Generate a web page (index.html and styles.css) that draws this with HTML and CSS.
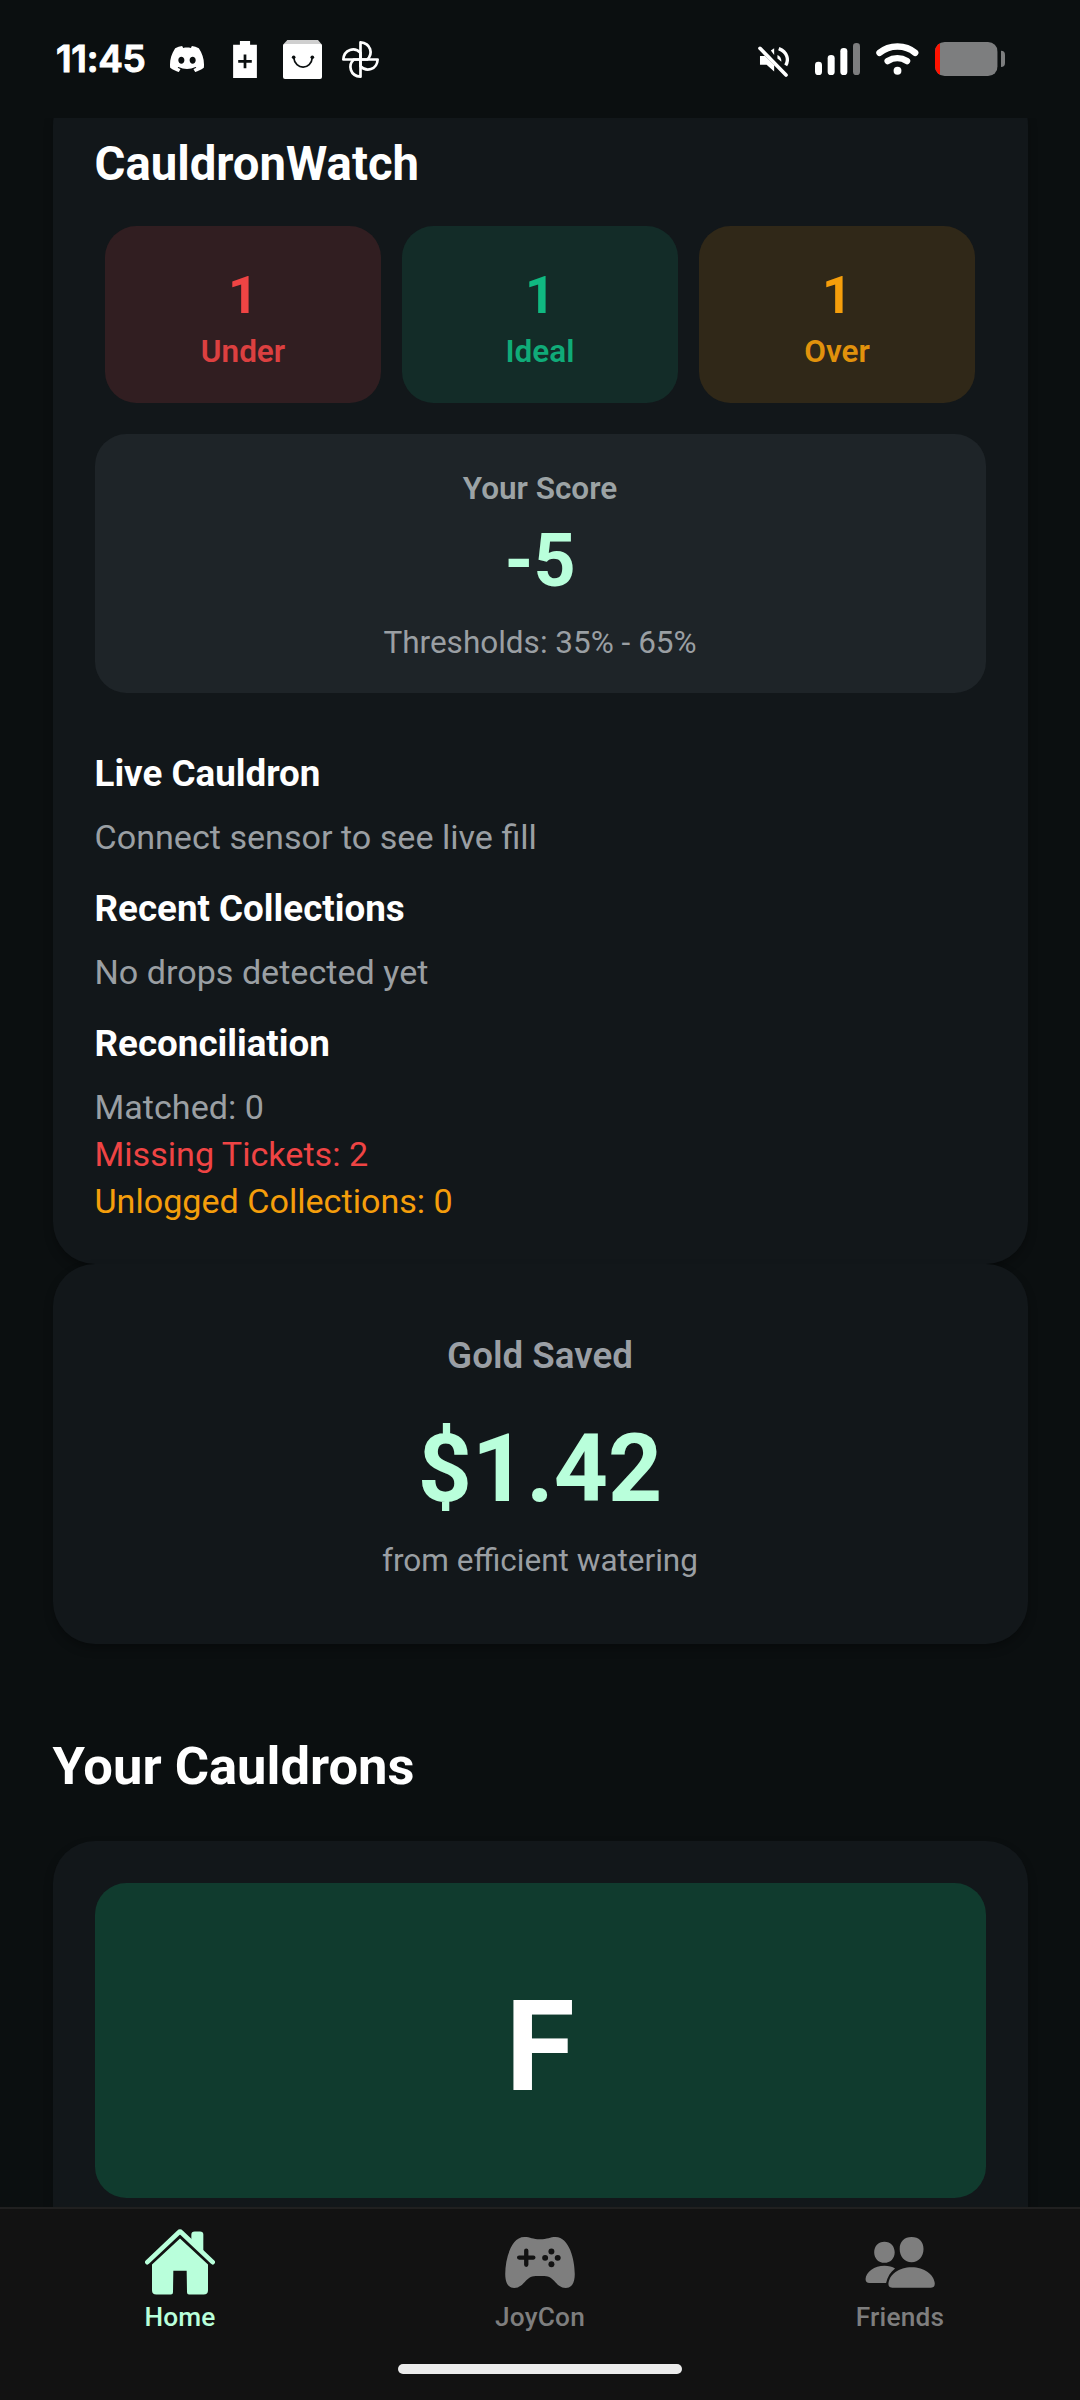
FILE: index.html
```html
<!DOCTYPE html>
<html lang="en">
<head>
<meta charset="utf-8">
<title>CauldronWatch</title>
<link rel="stylesheet" href="styles.css">
</head>
<body>
<div class="screen">
  <header class="status">
    <span class="clock">11:45</span>
    <svg class="s-discord" viewBox="0 2.8 24 18.4" preserveAspectRatio="none"><path d="M20.317 4.3698a19.7913 19.7913 0 00-4.8851-1.5152.0741.0741 0 00-.0785.0371c-.211.3753-.4447.8648-.6083 1.2495-1.8447-.2762-3.68-.2762-5.4868 0-.1636-.3933-.4058-.8742-.6177-1.2495a.077.077 0 00-.0785-.037 19.7363 19.7363 0 00-4.8852 1.515.0699.0699 0 00-.0321.0277C.5334 9.0458-.319 13.5799.0992 18.0578a.0824.0824 0 00.0312.0561c2.0528 1.5076 4.0413 2.4228 5.9929 3.0294a.0777.0777 0 00.0842-.0276c.4616-.6304.8731-1.2952 1.226-1.9942a.076.076 0 00-.0416-.1057c-.6528-.2476-1.2743-.5495-1.8722-.8923a.077.077 0 01-.0076-.1277c.1258-.0943.2517-.1923.3718-.2914a.0743.0743 0 01.0776-.0105c3.9278 1.7933 8.18 1.7933 12.0614 0a.0739.0739 0 01.0785.0095c.1202.099.246.1981.3728.2924a.077.077 0 01-.0066.1276 12.2986 12.2986 0 01-1.873.8914.0766.0766 0 00-.0407.1067c.3604.698.7719 1.3628 1.225 1.9932a.076.076 0 00.0842.0286c1.961-.6067 3.9495-1.5219 6.0023-3.0294a.077.077 0 00.0313-.0552c.5004-5.177-.8382-9.6739-3.5485-13.6604a.061.061 0 00-.0312-.0286zM8.02 15.3312c-1.1825 0-2.1569-1.0857-2.1569-2.419 0-1.3332.9555-2.4189 2.157-2.4189 1.2108 0 2.1757 1.0952 2.1568 2.419 0 1.3332-.9555 2.4189-2.1569 2.4189zm7.9748 0c-1.1825 0-2.1569-1.0857-2.1569-2.419 0-1.3332.9554-2.4189 2.1569-2.4189 1.2108 0 2.1757 1.0952 2.1568 2.419 0 1.3332-.946 2.4189-2.1568 2.4189Z"/></svg>
    <svg class="s-saver" viewBox="580 65 70 109"><path d="M580 76h20V65h30v11h20v98h-70z"/><path class="ink" d="M595 125h40M615 105v40" stroke-width="8"/></svg>
    <svg class="s-bag" viewBox="729 60 117 117"><path class="lid" d="M742 60h92l12 14v10H729V74z"/><path d="M729 78q0-6 6-6h105q6 0 6 6v93q0 6-6 6H735q-6 0-6-6z"/><path class="ink" d="M761 112c4 39 53 39 56 0" stroke-width="5"/><circle class="dot" cx="761" cy="112" r="5.500"/><circle class="dot" cx="817" cy="112" r="5.500"/></svg>
    <svg class="s-fan" viewBox="908 66 110 110"><g class="line" stroke-width="8" stroke-linejoin="round"><path id="blade" d="M963 121V70c31 2 38 34 20 51z"/><path d="M963 121h51c-2 31-34 38-51 20z"/><path d="M963 121v51c-31-2-38-34-20-51z"/><path d="M963 121h-51c2-31 34-38 51-20z"/></g></svg>
    <svg class="s-mute" viewBox="54 78 94 94"><path d="M60 108h15l28 28v19l-23-20H60zM93 92l10-7v20z"/><path d="M113 105q12 5 12 21l-12-10z"/><path class="line" d="M117 86c27 11 31 34 21 51" stroke-width="10"/><path class="line" d="M60 85l79 81" stroke-width="11" stroke-linecap="round"/></svg>
    <svg class="s-signal" viewBox="225 69 135 96"><rect x="225" y="125" width="21" height="40" rx="10"/><rect x="263" y="105" width="21" height="60" rx="10"/><rect x="301" y="84" width="21" height="81" rx="10"/><rect class="dim" x="339" y="69" width="21" height="96" rx="10"/></svg>
    <svg class="s-wifi" viewBox="408 68 130 98"><g class="line" stroke-width="20" stroke-linecap="round"><path d="M418 98c30-26 80-26 109 0"/><path d="M443 123c18-11 41-11 59 0"/></g><circle cx="473" cy="153" r="12"/></svg>
    <svg class="s-battery" viewBox="585 66 210 102"><clipPath id="cell"><rect x="585" y="66" width="188" height="102" rx="29"/></clipPath><g clip-path="url(#cell)"><path class="dim" d="M585 66h188v102H585z"/><path class="low" d="M585 66h15v102h-15z"/></g><path class="dim" d="M783 92q12 0 12 12v25q0 12-12 12z"/></svg>
  </header>

  <main class="scroll">
    <section class="card watch">
      <h1 class="title">CauldronWatch</h1>
      <div class="stats">
        <div class="stat under"><b class="stat-num">1</b><span class="stat-label">Under</span></div>
        <div class="stat ideal"><b class="stat-num">1</b><span class="stat-label">Ideal</span></div>
        <div class="stat over"><b class="stat-num">1</b><span class="stat-label">Over</span></div>
      </div>
      <div class="score">
        <span class="score-label">Your Score</span>
        <b class="score-num">-5</b>
        <span class="small">Thresholds: 35% - 65%</span>
      </div>
      <h3 class="sub first">Live Cauldron</h3>
      <p class="text">Connect sensor to see live fill</p>
      <h3 class="sub">Recent Collections</h3>
      <p class="text">No drops detected yet</p>
      <h3 class="sub">Reconciliation</h3>
      <p class="text">Matched: 0</p>
      <p class="text red">Missing Tickets: 2</p>
      <p class="text amber">Unlogged Collections: 0</p>
    </section>

    <section class="card gold">
      <span class="gold-label">Gold Saved</span>
      <b class="gold-num">$1.42</b>
      <span class="small">from efficient watering</span>
    </section>

    <h2 class="heading">Your Cauldrons</h2>
    <section class="card cauldron">
      <div class="avatar">F</div>
    </section>
  </main>

  <nav class="nav">
    <div class="tabs">
      <a class="tab active">
        <svg class="i-home" viewBox="132 143 210 197"><path d="M271 160q0-10 10-10h16q10 0 10 10v50l-36-34z"/><path d="M153 249l84-78 84 78v77q0 13-13 13h-44q-6 0-6-7l-1-64h-40l-1 64q0 7-6 7h-44q-13 0-13-13z"/><path class="roof" d="M139 242l94-89q4-4 8 0l94 89"/></svg>
        <span>Home</span>
      </a>
      <a class="tab">
        <svg class="i-pad" viewBox="132 104 210 154"><path d="M190 104C208 104 215 111 237 111S268 104 284 104C325 104 342 172 342 216C342 244 332 258 315 258C285 258 281 222 250 222H224C193 222 189 258 159 258C142 258 132 244 132 216C132 172 149 104 190 104Z"/><path class="hole-line" d="M174 166h43M195.500 145v43"/><g class="hole"><circle cx="271.500" cy="148" r="9"/><circle cx="271.500" cy="186" r="9"/><circle cx="252.500" cy="167" r="9"/><circle cx="290.500" cy="167" r="9"/></g></svg>
        <span>JoyCon</span>
      </a>
      <a class="tab">
        <svg class="i-friends" viewBox="132 164 210 154"><path d="M190 178c19 0 31 14 31 32 0 19-13 32-31 32s-31-13-31-32c0-18 12-32 31-32zM272 164c22 0 36 14 36 36 0 23-15 40-36 40s-36-17-36-40c0-22 14-36 36-36z"/><path d="M202 305C204 277 234 255 272 255S340 277 342 305q0 12-12 12H214q-12 0-12-12z"/><path d="M133 291C134 270 160 251 190 251C203 251 214 254 222 259C208 270 199 284 195 303H145q-12 0-12-12z"/></svg>
        <span>Friends</span>
      </a>
    </div>
    <div class="gesture"></div>
  </nav>
</div>
</body>
</html>
```
FILE: styles.css
```css
* { box-sizing: border-box; }
body { margin: 0; background: #0b0f10; font-family: Roboto, "Liberation Sans", sans-serif; color: #fff; }
h1, h2, h3, p { margin: 0; }
svg { display: block; flex: none; fill: currentColor; }

.screen { width: 1080px; height: 2400px; display: flex; flex-direction: column; overflow: hidden; }

.status { height: 118px; flex: none; display: flex; align-items: center; padding-left: 56px; }
.clock { width: 114px; font: 600 37px/44px Inter, sans-serif; letter-spacing: -0.3px; -webkit-text-stroke: 1px #fff; }
.line { fill: none; stroke: #fff; }
.ink { fill: none; stroke: #0b0f10; }
.dot { fill: #0b0f10; }
.lid { fill: #cfcfcf; }
.dim { fill: #7d7e7f; }
.low { fill: #ff1200; }
.s-discord { width: 34px; height: 26px; margin-right: 29px; }
.s-saver { width: 24px; height: 37px; margin-right: 26px; }
.s-bag { width: 39px; height: 39px; margin-right: 20px; }
.s-fan { width: 37px; height: 37px; margin-right: auto; }
.s-mute { width: 31px; height: 31px; margin: 5px 26px 0 0; }
.s-signal { width: 45px; height: 32px; margin-right: 16px; }
.s-wifi { width: 43px; height: 32px; margin-right: 16px; }
.s-battery { width: 70px; height: 34px; margin-right: 75px; }

.scroll { flex: none; height: 2089px; overflow: hidden; padding: 0 52.5px; }
.card { background: #12171a; border-radius: 42px; box-shadow: 0 5px 10px rgba(0, 0, 0, .28); }
.watch { margin-top: -35px; padding: 53px 42px 39px; height: 1181px; }
.title { font-size: 47.25px; line-height: 56px; font-weight: 700; }

.stats { display: grid; grid-template-columns: repeat(3, 1fr); gap: 21px; margin-top: 34px; padding: 0 10.5px; }
.stat { height: 177px; border-radius: 31.5px; padding-top: 38px; display: flex; flex-direction: column; align-items: center; gap: 7px; }
.stat-num { font-size: 52.5px; line-height: 62px; }
.stat-label { font-size: 31.5px; line-height: 37px; font-weight: 600; opacity: .9; }
.under { background: #311e21; color: #ef4444; }
.ideal { background: #132c28; color: #10b981; }
.over { background: #302818; color: #f59e0b; }

.score { margin-top: 31px; height: 259px; padding-top: 36px; border-radius: 31.5px; background: #1e2428; display: flex; flex-direction: column; align-items: center; }
.score-label { font-size: 31.5px; line-height: 37px; font-weight: 600; color: #9ca3a5; }
.score-num { font-size: 73.5px; line-height: 86px; margin: 11px 0 20px; color: #b9ffdb; }
.small { font-size: 31.5px; line-height: 37px; color: #9a9fa3; }

.sub { font-size: 36.75px; line-height: 43px; font-weight: 700; margin: 26px 0 19px; }
.sub.first { margin-top: 59px; }
.text { font-size: 34.125px; line-height: 47px; color: #9a9fa3; }
.text.red { color: #ef4444; }
.text.amber { color: #f59e0b; }

.gold { height: 380px; padding-top: 70px; display: flex; flex-direction: column; align-items: center; }
.gold-label { font-size: 36.75px; line-height: 43px; font-weight: 600; color: #9a9fa5; }
.gold-num { font-size: 94.5px; line-height: 111px; margin: 36px 0 18px; color: #b9ffdb; }

.heading { font-size: 52.5px; line-height: 62px; font-weight: 700; margin: 91px 0 44px; }
.cauldron { height: 900px; padding: 42px; }
.avatar { height: 315px; border-radius: 31.5px; background: #103b2e; padding-top: 90px; text-align: center; font-size: 126px; line-height: 148px; font-weight: 700; }

.nav { position: relative; flex: none; height: 193px; background: #121212; border-top: 2px solid #202020; display: flex; flex-direction: column; align-items: center; justify-content: space-between; padding-bottom: 26px; }
.tabs { width: 100%; display: grid; grid-template-columns: repeat(3, 1fr); }
.tab { height: 124px; display: flex; flex-direction: column; align-items: center; justify-content: flex-end; font-size: 26.25px; line-height: 32px; font-weight: 500; color: #7e7e7e; letter-spacing: .2px; }
.tab.active { color: #b9ffdb; }
.i-home { width: 70px; height: 66px; margin: 0 1px 6px 0; }
.i-pad, .i-friends { width: 70px; height: 51px; margin: 0 1px 13px 0; }
.roof { fill: none; stroke: currentColor; stroke-width: 14; stroke-linecap: round; }
.hole { fill: #121212; }
.hole-line { stroke: #121212; stroke-width: 13; stroke-linecap: round; }
.gesture { width: 284px; height: 10px; border-radius: 5px; background: #ececec; }
```
